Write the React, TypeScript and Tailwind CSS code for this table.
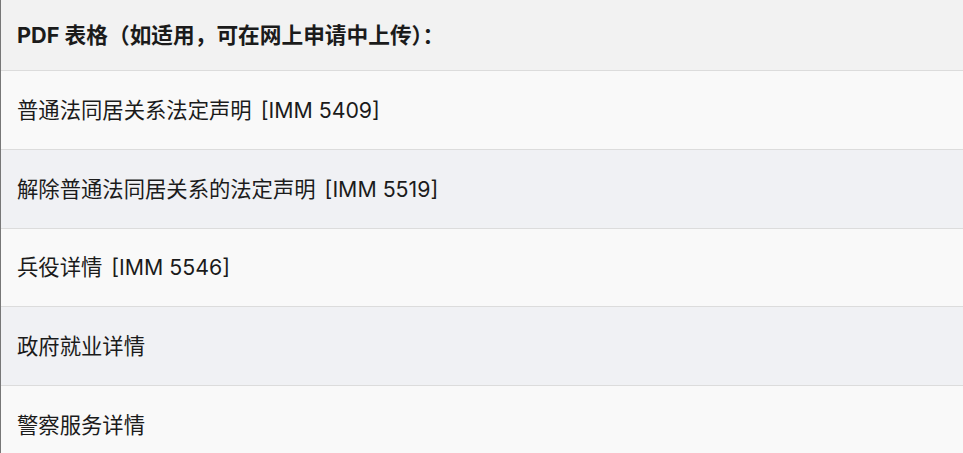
import React from "react";

const rows: [string, string | null][] = [
  ["普通法同居关系法定声明", "[IMM 5409]"],
  ["解除普通法同居关系的法定声明", "[IMM 5519]"],
  ["兵役详情", "[IMM 5546]"],
  ["政府就业详情", null],
  ["警察服务详情", null],
];

export default function App() {
  return (
    <div
      className="w-[963px] h-[453px] overflow-hidden border-l border-[#777777] text-[#1b1b1b]"
      style={{ fontFamily: '"Inter", "Noto Sans CJK SC", sans-serif' }}
    >
      <div className="h-[70px] bg-[#f2f2f2] flex items-center pl-4 text-[21.7px] font-bold">
        PDF 表格（如适用，可在网上申请中上传）：
      </div>
      {rows.map(([zh, code], i) => (
        <div
          key={i}
          className={`h-[78.75px] border-t border-[#dcdcdc] flex items-center pl-4 pt-[2px] text-[21.33px] ${
            i % 2 === 0 ? "bg-[#f9f9f9]" : "bg-[#f0f1f4]"
          }`}
        >
          <span>{zh}</span>
          {code && <span className="ml-[9px]">{code}</span>}
        </div>
      ))}
    </div>
  );
}
